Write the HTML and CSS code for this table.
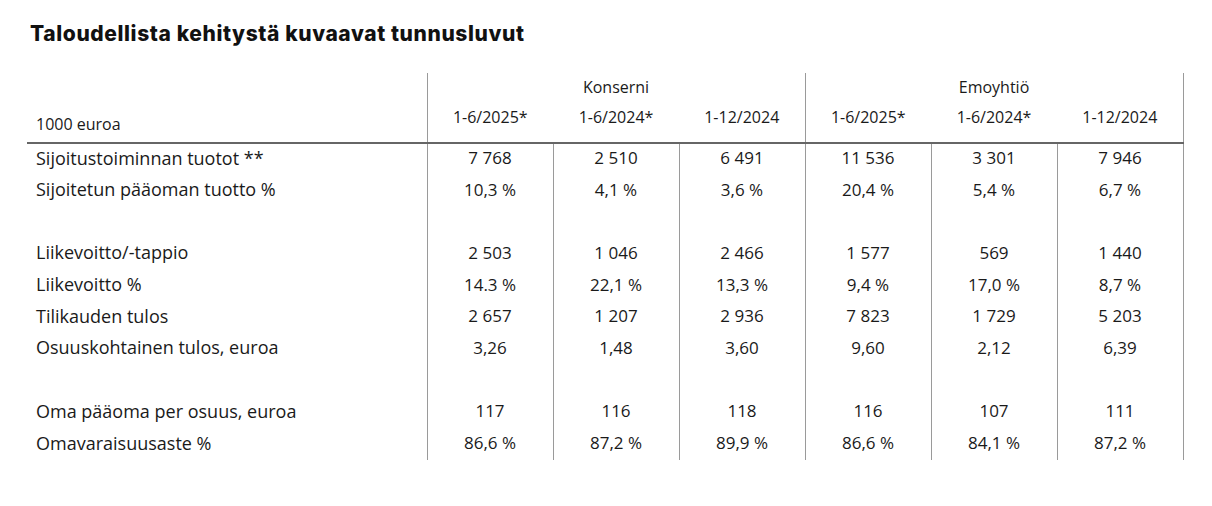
FILE: index.html
```html
<!DOCTYPE html>
<html lang="fi">
<head>
<meta charset="utf-8">
<title>Taloudellista kehitystä kuvaavat tunnusluvut</title>
<link rel="stylesheet" href="styles.css">
</head>
<body>
<main class="page">
  <h1 class="title">Taloudellista kehitystä kuvaavat tunnusluvut</h1>
  <table class="kpi">
    <colgroup>
      <col class="c-label">
      <col class="c-num"><col class="c-num"><col class="c-num">
      <col class="c-num"><col class="c-num"><col class="c-num">
    </colgroup>
    <thead>
      <tr class="h-group">
        <th class="unit" rowspan="2">1000 euroa</th>
        <th class="group" colspan="3">Konserni</th>
        <th class="group" colspan="3">Emoyhtiö</th>
      </tr>
      <tr class="h-period">
        <th class="gstart">1-6/2025*</th>
        <th>1-6/2024*</th>
        <th class="gend">1-12/2024</th>
        <th class="gstart">1-6/2025*</th>
        <th>1-6/2024*</th>
        <th class="gend">1-12/2024</th>
      </tr>
    </thead>
    <tbody>
      <tr><td>Sijoitustoiminnan tuotot **</td><td>7 768</td><td>2 510</td><td>6 491</td><td>11 536</td><td>3 301</td><td>7 946</td></tr>
      <tr><td>Sijoitetun pääoman tuotto %</td><td>10,3 %</td><td>4,1 %</td><td>3,6 %</td><td>20,4 %</td><td>5,4 %</td><td>6,7 %</td></tr>
      <tr class="spacer"><td></td><td></td><td></td><td></td><td></td><td></td><td></td></tr>
      <tr><td>Liikevoitto/-tappio</td><td>2 503</td><td>1 046</td><td>2 466</td><td>1 577</td><td>569</td><td>1 440</td></tr>
      <tr><td>Liikevoitto %</td><td>14.3 %</td><td>22,1 %</td><td>13,3 %</td><td>9,4 %</td><td>17,0 %</td><td>8,7 %</td></tr>
      <tr><td>Tilikauden tulos</td><td>2 657</td><td>1 207</td><td>2 936</td><td>7 823</td><td>1 729</td><td>5 203</td></tr>
      <tr><td>Osuuskohtainen tulos, euroa</td><td>3,26</td><td>1,48</td><td>3,60</td><td>9,60</td><td>2,12</td><td>6,39</td></tr>
      <tr class="spacer"><td></td><td></td><td></td><td></td><td></td><td></td><td></td></tr>
      <tr><td>Oma pääoma per osuus, euroa</td><td>117</td><td>116</td><td>118</td><td>116</td><td>107</td><td>111</td></tr>
      <tr><td>Omavaraisuusaste %</td><td>86,6 %</td><td>87,2 %</td><td>89,9 %</td><td>86,6 %</td><td>84,1 %</td><td>87,2 %</td></tr>
    </tbody>
  </table>
</main>
</body>
</html>
```

FILE: styles.css
```css
html, body {
  margin: 0;
  padding: 0;
  background: #ffffff;
}

body {
  font-family: "Open Sans", "Liberation Sans", sans-serif;
  color: #1a1a1a;
}

.page {
  padding: 21px 0 0 27px;
}

.title {
  margin: 0 0 0 3px;
  font-family: "Inter", "Liberation Sans", sans-serif;
  font-weight: 800;
  font-size: 21px;
  line-height: 26px;
  letter-spacing: 0.6px;
  color: #111;
}

.kpi {
  margin-top: 26px;
  border-collapse: collapse;
  table-layout: fixed;
  width: 1156px;
  font-size: 17px;
}

.c-label { width: 400px; }
.c-num { width: 126px; }

.kpi th {
  font-weight: 400;
  padding: 0;
}

.h-group th {
  height: 28px;
  font-size: 16px;
  vertical-align: middle;
  text-align: center;
}

.h-group .group {
  border-left: 1px solid #9a9a9a;
  border-right: 1px solid #9a9a9a;
}

.h-group .unit {
  text-align: left;
  vertical-align: bottom;
  padding: 0 0 7px 9px;
  font-size: 16px;
}

.h-period th {
  height: 42px;
  font-size: 16px;
  vertical-align: middle;
  text-align: center;
  padding-bottom: 9px;
  box-sizing: border-box;
  border-bottom: 2px solid #666;
}

.h-period .gstart { border-left: 1px solid #9a9a9a; }
.h-period .gend { border-right: 1px solid #9a9a9a; }

.kpi thead .unit { border-bottom: 2px solid #666; }

.kpi td {
  height: 31.7px;
  padding: 0 0 3px 0;
  box-sizing: border-box;
  text-align: center;
  vertical-align: middle;
  border-left: 1px solid #9a9a9a;
  border-right: 1px solid #9a9a9a;
  white-space: nowrap;
}

.kpi td:first-child {
  text-align: left;
  padding-left: 9px;
  border-left: none;
  font-size: 18px;
}
```
